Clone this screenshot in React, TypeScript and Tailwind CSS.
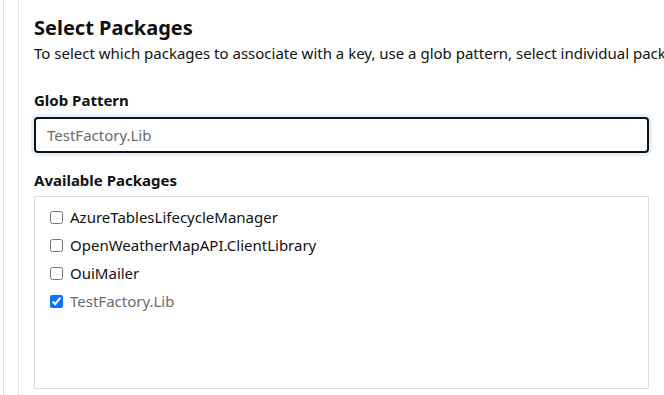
const packages = [
  { name: 'AzureTablesLifecycleManager', checked: false },
  { name: 'OpenWeatherMapAPI.ClientLibrary', checked: false },
  { name: 'OuiMailer', checked: false },
  { name: 'TestFactory.Lib', checked: true },
];

export default function App() {
  return (
    <div className="flex h-[395px] w-[664px] overflow-hidden bg-white font-['Noto_Sans',sans-serif] text-[#111]">
      <div className="ml-[3px] w-[15px] shrink-0 border-l border-[#e3e3e3]" />
      <div className="shrink-0 border-l border-[#e3e3e3] pl-[15px] pt-[16px]">
        <div className="w-[615px]">
          <h2 className="text-[20px] font-bold leading-[24px]">Select Packages</h2>
          <p className="w-[630px] overflow-hidden whitespace-nowrap text-[15px] leading-[26px]">
            To select which packages to associate with a key, use a glob pattern, select individual pack
          </p>

          <label className="mt-[24px] block text-[15px] font-bold leading-[20px]">Glob Pattern</label>
          <div className="mt-[7px] flex h-[36px] items-center rounded-[4px] border-2 border-[#111] px-[11px] text-[15px] text-[#6b6b6b] shadow-[0_0_0_3px_rgba(190,220,255,0.45)]">
            TestFactory.Lib
          </div>

          <label className="mt-[17px] block text-[15px] font-bold leading-[20px]">Available Packages</label>
          <div className="mt-[6px] h-[193px] border border-[#dcdcdc] px-[15px] pt-[6px]">
            {packages.map((p) => (
              <label key={p.name} className="flex h-[28px] items-center gap-[7px] text-[15px]">
                <input type="checkbox" defaultChecked={p.checked} className="m-0 h-[13px] w-[13px]" />
                <span className={p.checked ? 'text-[#6b6b6b]' : ''}>{p.name}</span>
              </label>
            ))}
          </div>
        </div>
      </div>
    </div>
  );
}
